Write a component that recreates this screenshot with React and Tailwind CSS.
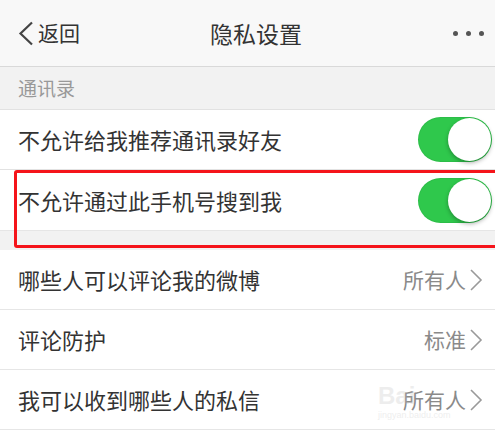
const font = { fontFamily: '"Noto Sans CJK SC", "Noto Sans", sans-serif' };

function Toggle() {
  return (
    <div className="w-[74px] h-[45px] rounded-full bg-[#2fc84c] relative shadow-[inset_0_0_0_1px_rgba(0,0,0,0.05)]">
      <div className="absolute right-[1px] top-[1px] w-[43px] h-[43px] rounded-full bg-white shadow-[0_2px_4px_rgba(0,0,0,0.3)]" />
    </div>
  );
}

function ToggleRow({ label, border = true }) {
  return (
    <div className={`h-[60px] flex items-center justify-between pl-[18px] pr-[3px] bg-white ${border ? 'border-b border-[#e2e2e2]' : ''}`}>
      <span className="text-[22px] text-[#333]">{label}</span>
      <Toggle />
    </div>
  );
}

function LinkRow({ label, value }) {
  return (
    <div className="h-[60px] flex items-center justify-between pl-[18px] pr-[12px] bg-white border-b border-[#e6e6e6]">
      <span className="text-[22px] text-[#333]">{label}</span>
      <div className="flex items-center text-[21px] text-[#8a8a8a]">
        <span>{value}</span>
        <svg width="14" height="22" viewBox="0 0 14 22" className="ml-[3px]">
          <polyline points="2,1 12,11 2,21" fill="none" stroke="#9a9a9a" strokeWidth="1.6" />
        </svg>
      </div>
    </div>
  );
}

export default function App() {
  return (
    <div className="w-[495px] h-[435px] bg-white overflow-hidden relative" style={font}>
      {/* Navbar */}
      <div className="h-[67px] bg-[#f8f8f8] border-b border-[#d9d9d9] flex items-center justify-between pl-[18px] pr-[11px]">
        <div className="flex items-center w-[100px] text-[21px] text-[#333]">
          <svg width="16" height="25" viewBox="0 0 16 25" className="mr-[4px]">
            <polyline points="14,1.5 2.5,12.5 14,23.5" fill="none" stroke="#444" strokeWidth="2.2" />
          </svg>
          <span>返回</span>
        </div>
        <span className="text-[23px] text-[#333] ml-[10px]">隐私设置</span>
        <div className="flex items-center justify-end gap-[8px] w-[100px]">
          <span className="w-[5px] h-[5px] rounded-full bg-[#555]" />
          <span className="w-[5px] h-[5px] rounded-full bg-[#555]" />
          <span className="w-[5px] h-[5px] rounded-full bg-[#555]" />
        </div>
      </div>

      {/* Section header */}
      <div className="h-[43px] bg-[#f2f2f2] border-b border-[#e2e2e2] flex items-center pl-[18px]">
        <span className="text-[19px] text-[#999]">通讯录</span>
      </div>

      <ToggleRow label="不允许给我推荐通讯录好友" />
      <ToggleRow label="不允许通过此手机号搜到我" border={false} />

      <div className="h-[20px] bg-[#f2f2f2] border-t border-[#e6e6e6]" />

      <LinkRow label="哪些人可以评论我的微博" value="所有人" />
      <LinkRow label="评论防护" value="标准" />
      <LinkRow label="我可以收到哪些人的私信" value="所有人" />

      {/* annotation */}
      <div className="absolute left-[14px] top-[170px] w-[490px] h-[78px] border-[3px] border-[#f5141a] rounded-[3px]" />

      {/* watermark */}
      <div className="absolute left-[378px] top-[384px] flex flex-col items-start opacity-25 text-[#bbb] pointer-events-none">
        <span className="text-[24px] leading-none font-bold" style={{ fontFamily: '"Liberation Sans", sans-serif' }}>Bai</span>
        <span className="text-[9px] leading-none mt-[3px]" style={{ fontFamily: '"Liberation Sans", sans-serif' }}>jingyan.baidu.com</span>
      </div>
    </div>
  );
}
